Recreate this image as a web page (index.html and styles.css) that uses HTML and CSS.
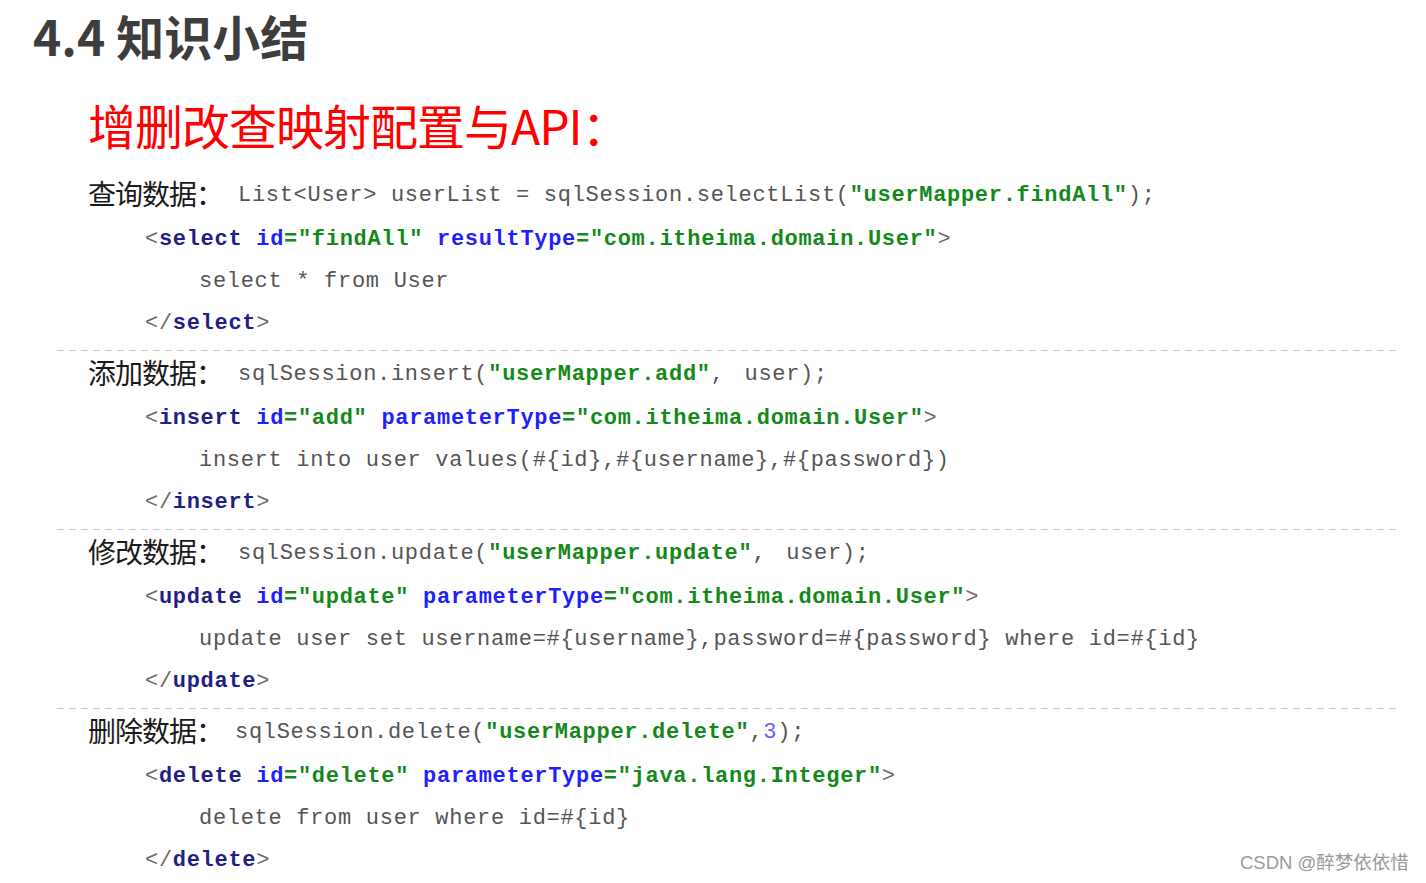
FILE: index.html
```html
<!DOCTYPE html>
<html lang="zh">
<head>
<meta charset="utf-8">
<title>4.4 知识小结</title>
<link rel="stylesheet" href="styles.css">
</head>
<body>
<div class="page">
  <h1 class="title">4.4 知识小结</h1>
  <h2 class="subtitle">增删改查映射配置与API：</h2>
  <div class="sections">
    <section class="sec">
      <div class="label-row"><span class="label">查询数据：</span><code class="code api">List&lt;User&gt; userList = sqlSession.selectList(<b class="s">"userMapper.findAll"</b>);</code></div>
      <div class="code tagline"><span class="p">&lt;</span><b class="t">select</b> <b class="a">id</b><b class="s">="findAll"</b> <b class="a">resultType</b><b class="s">="com.itheima.domain.User"</b><span class="p">&gt;</span></div>
      <div class="code body">select * from User</div>
      <div class="code tagline"><span class="p">&lt;/</span><b class="t">select</b><span class="p">&gt;</span></div>
    </section>
    <div class="divider"></div>
    <section class="sec">
      <div class="label-row"><span class="label">添加数据：</span><code class="code api">sqlSession.insert(<b class="s">"userMapper.add"</b>,<span class="gap"></span> user);</code></div>
      <div class="code tagline"><span class="p">&lt;</span><b class="t">insert</b> <b class="a">id</b><b class="s">="add"</b> <b class="a">parameterType</b><b class="s">="com.itheima.domain.User"</b><span class="p">&gt;</span></div>
      <div class="code body">insert into user values(#{id},#{username},#{password})</div>
      <div class="code tagline"><span class="p">&lt;/</span><b class="t">insert</b><span class="p">&gt;</span></div>
    </section>
    <div class="divider"></div>
    <section class="sec">
      <div class="label-row"><span class="label">修改数据：</span><code class="code api">sqlSession.update(<b class="s">"userMapper.update"</b>,<span class="gap"></span> user);</code></div>
      <div class="code tagline"><span class="p">&lt;</span><b class="t">update</b> <b class="a">id</b><b class="s">="update"</b> <b class="a">parameterType</b><b class="s">="com.itheima.domain.User"</b><span class="p">&gt;</span></div>
      <div class="code body">update user set username=#{username},password=#{password} where id=#{id}</div>
      <div class="code tagline"><span class="p">&lt;/</span><b class="t">update</b><span class="p">&gt;</span></div>
    </section>
    <div class="divider"></div>
    <section class="sec">
      <div class="label-row"><span class="label">删除数据：</span><code class="code api tight">sqlSession.delete(<b class="s">"userMapper.delete"</b>,<span class="n">3</span>);</code></div>
      <div class="code tagline"><span class="p">&lt;</span><b class="t">delete</b> <b class="a">id</b><b class="s">="delete"</b> <b class="a">parameterType</b><b class="s">="java.lang.Integer"</b><span class="p">&gt;</span></div>
      <div class="code body">delete from user where id=#{id}</div>
      <div class="code tagline"><span class="p">&lt;/</span><b class="t">delete</b><span class="p">&gt;</span></div>
    </section>
  </div>
  <div class="watermark">CSDN @醉梦依依惜</div>
</div>
</body>
</html>
```
FILE: styles.css
```css
html, body {
  margin: 0;
  padding: 0;
  background: #ffffff;
}

.page {
  position: relative;
  width: 1426px;
  height: 883px;
  overflow: hidden;
  font-family: "Noto Sans CJK SC", "Noto Sans", sans-serif;
}

.title {
  margin: 0;
  padding-left: 33px;
  height: 70px;
  font-size: 48px;
  line-height: 70px;
  font-weight: 700;
  color: #3d3d3d;
}

.subtitle {
  margin: 24px 0 0 88px;
  font-size: 48px;
  line-height: 60px;
  font-weight: 400;
  color: #ff0000;
  letter-spacing: -1px;
}

.sections {
  margin: 19px 0 0 57px;
  width: 1343px;
  display: flex;
  flex-direction: column;
}

.sec {
  padding-left: 31px;
  display: flex;
  flex-direction: column;
}

.label-row {
  height: 40px;
  margin-bottom: 6px;
  display: flex;
  align-items: center;
}

.label {
  font-size: 28px;
  line-height: 40px;
  color: #1a1a1a;
  letter-spacing: -1px;
}

.code {
  font-family: "Liberation Mono", "Courier New", monospace;
  font-size: 22px;
  letter-spacing: 0.7px;
  color: #555555;
  white-space: pre;
  line-height: 42px;
}

.api {
  margin-left: 15px;
  margin-top: 5px;
  line-height: 40px;
}

.api.tight {
  margin-left: 12px;
}

.tagline {
  padding-left: 57px;
}

.body {
  padding-left: 111px;
}

.code b {
  font-weight: 700;
}

.p { color: #6e6a66; }
.t { color: #1f1f85; }
.a { color: #1f1fff; }
.s { color: #14891a; }
.n { color: #6a5cff; }

.gap {
  display: inline-block;
  width: 6px;
}

.divider {
  height: 1px;
  margin: 5px 0 1px;
  background: repeating-linear-gradient(to right, #c8c8c8 0 7px, transparent 7px 12px);
}

.watermark {
  position: absolute;
  left: 1240px;
  top: 850px;
  font-family: "Liberation Sans", "Noto Sans CJK SC", sans-serif;
  font-size: 18.5px;
  line-height: 26px;
  color: #9a9a9a;
  text-shadow: 0 0 2px #ffffff;
}
```
